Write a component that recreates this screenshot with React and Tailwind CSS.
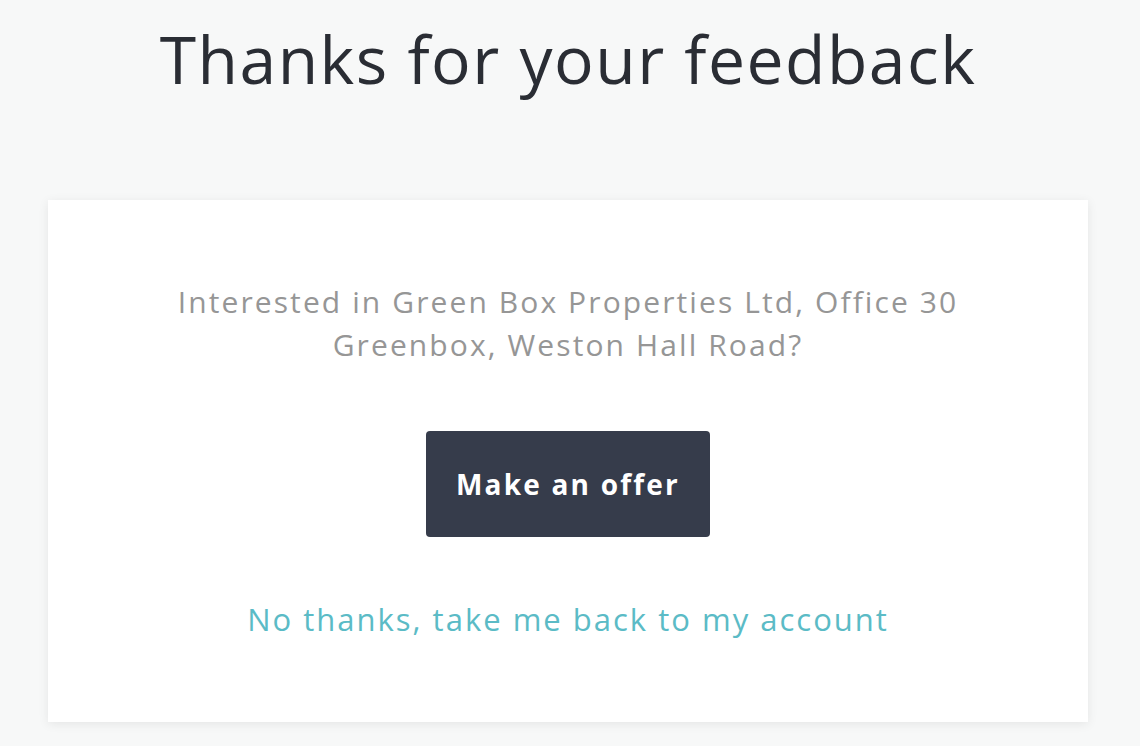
import React from 'react'

const App = () => {
  return (
    <div className="min-h-[746px] bg-[#f7f8f8] pl-[48px] pr-[52px] pb-6 font-['Open_Sans',sans-serif]">
      <h1 className="h-[200px] pt-[18px] text-center text-[66px] leading-[80px] font-normal tracking-[1.5px] text-[#2a2d34]">
        Thanks for your feedback
      </h1>

      <div className="flex h-[522px] flex-col items-center bg-white pt-[80px] shadow-[0_2px_10px_rgba(0,0,0,0.08)]">
        <p className="text-center text-[30px] leading-[43px] tracking-[2.1px] text-[#969696]">
          Interested in Green Box Properties Ltd, Office 30
          <br />
          Greenbox, Weston Hall Road?
        </p>

        <button className="mt-[65px] h-[106px] w-[284px] rounded-[4px] bg-[#363c4b] text-[28px] font-bold tracking-[2.2px] text-white">
          Make an offer
        </button>

        <a href="#" className="mt-[62px] text-[31px] leading-[40px] tracking-[2px] text-[#5bbbc6]">
          No thanks, take me back to my account
        </a>
      </div>
    </div>
  )
}

export default App
